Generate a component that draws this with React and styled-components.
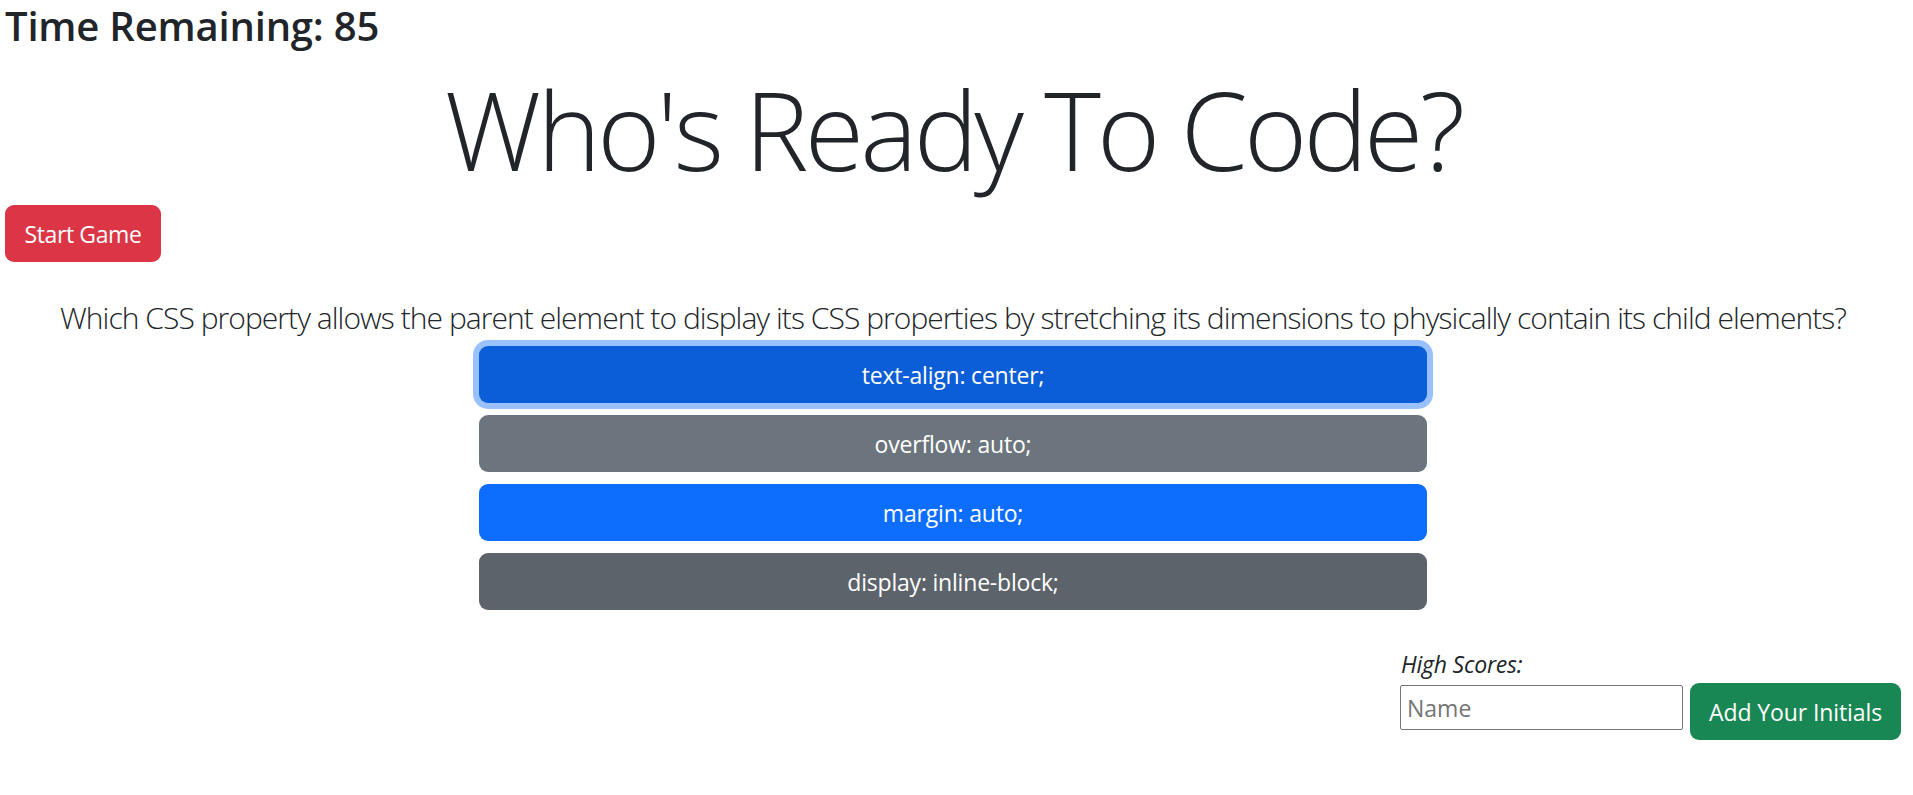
import React from 'react'
import styled, { createGlobalStyle } from 'styled-components';

const GlobalStyle = createGlobalStyle`
  * { box-sizing: border-box; }
  html, body { margin: 0; padding: 0; background: #fff; }
  body {
    font-family: "Open Sans", "Noto Sans", sans-serif;
    color: #212529;
    font-size: 24px;
  }
`

const answers = [
  { text: 'text-align: center;', tone: 'focused' },
  { text: 'overflow: auto;', tone: 'secondary' },
  { text: 'margin: auto;', tone: 'primary' },
  { text: 'display: inline-block;', tone: 'secondaryDark' },
]

const tones = {
  focused: '#0b5ed7',
  primary: '#0d6efd',
  secondary: '#6c757d',
  secondaryDark: '#5c636a',
}

const App = () => {
  return (
    <>
      <GlobalStyle />
      <Page>
        <Timer>Time Remaining: 85</Timer>
        <Title>Who's Ready To Code?</Title>
        <StartButton>Start Game</StartButton>
        <Question>
          Which CSS property allows the parent element to display its CSS properties by stretching its dimensions to physically contain its child elements?
        </Question>
        <AnswerList>
          {answers.map((a) => (
            <AnswerButton key={a.text} tone={a.tone} $focused={a.tone === 'focused'}>
              {a.text}
            </AnswerButton>
          ))}
        </AnswerList>
        <ScoreBox>
          <ScoreLabel>High Scores:</ScoreLabel>
          <ScoreRow>
            <NameInput placeholder="Name" />
            <SaveButton>Add Your Initials</SaveButton>
          </ScoreRow>
        </ScoreBox>
      </Page>
    </>
  )
}

export default App;

const Page = styled.div`
  padding: 0 12px 0 5px;
  display: flex;
  flex-direction: column;
  min-height: 795px;
`

const Timer = styled.h3`
  margin: 0;
  font-size: 40px;
  font-weight: 600;
  line-height: 50px;
  letter-spacing: -0.2px;
  padding-top: 1px;
`

const Title = styled.h1`
  margin: 14px 0 10px;
  text-align: center;
  font-size: 108px;
  font-weight: 300;
  line-height: 130px;
  letter-spacing: -3.8px;
`

const StartButton = styled.button`
  align-self: flex-start;
  width: 156px;
  height: 57px;
  border: none;
  border-radius: 9px;
  background: #dc3545;
  color: #fff;
  font-family: inherit;
  font-size: 23px;
  letter-spacing: -0.4px;
  cursor: pointer;
`

const Question = styled.p`
  margin: 33px 0 6px;
  text-align: center;
  font-size: 30px;
  font-weight: 300;
  line-height: 45px;
  letter-spacing: -0.95px;
  white-space: nowrap;
`

const AnswerList = styled.div`
  display: flex;
  flex-direction: column;
  gap: 12px;
  width: 948px;
  margin-left: 474px;
`

const AnswerButton = styled.button`
  height: 57px;
  border: none;
  border-radius: 9px;
  background: ${(p) => tones[p.tone]};
  color: #fff;
  font-family: inherit;
  font-size: 23px;
  letter-spacing: -0.2px;
  cursor: pointer;
  box-shadow: ${(p) => (p.$focused ? '0 0 0 6px #98c1fe' : 'none')};
`

const ScoreBox = styled.div`
  align-self: flex-end;
  margin-top: 39px;
  display: flex;
  flex-direction: column;
`

const ScoreLabel = styled.label`
  padding-left: 1px;
  font-size: 23px;
  font-style: italic;
  line-height: 31px;
  letter-spacing: -0.2px;
`

const ScoreRow = styled.div`
  display: flex;
  align-items: flex-start;
  gap: 7px;
  margin-top: 3px;
`

const NameInput = styled.input`
  width: 283px;
  height: 45px;
  margin-top: 2px;
  padding: 0 6px;
  border: 1px solid #767676;
  border-radius: 2px;
  font-family: inherit;
  font-size: 23px;
  color: #212529;
  &::placeholder {
    color: #757575;
  }
`

const SaveButton = styled.button`
  width: 211px;
  height: 57px;
  border: none;
  border-radius: 9px;
  background: #198754;
  color: #fff;
  font-family: inherit;
  font-size: 23px;
  letter-spacing: -0.1px;
  cursor: pointer;
`
